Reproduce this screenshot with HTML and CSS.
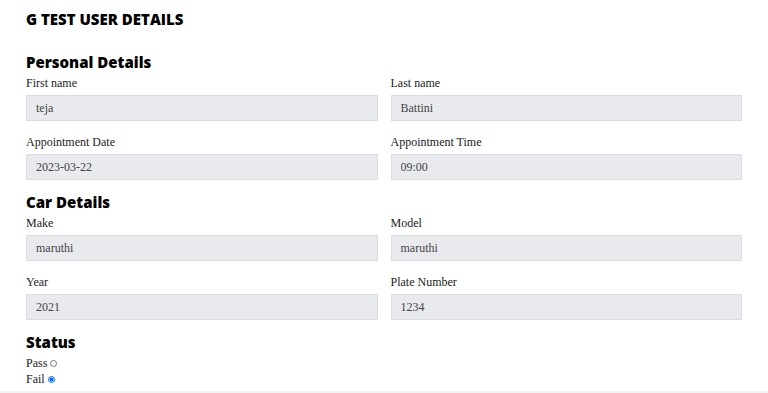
FILE: index.html
```html
<!DOCTYPE html>
<html>
<head>
    <title>G Test User Details</title>
    <link rel="stylesheet" href="styles.css">
</head>
<body>
    <div class="page">
        <h1>G TEST USER DETAILS</h1>

        <h2>Personal Details</h2>
        <div class="grid">
            <div class="field">
                <label>First name</label>
                <input type="text" value="teja" readonly>
            </div>
            <div class="field">
                <label>Last name</label>
                <input type="text" value="Battini" readonly>
            </div>
            <div class="field">
                <label>Appointment Date</label>
                <input type="text" value="2023-03-22" readonly>
            </div>
            <div class="field">
                <label>Appointment Time</label>
                <input type="text" value="09:00" readonly>
            </div>
        </div>

        <h2>Car Details</h2>
        <div class="grid">
            <div class="field">
                <label>Make</label>
                <input type="text" value="maruthi" readonly>
            </div>
            <div class="field">
                <label>Model</label>
                <input type="text" value="maruthi" readonly>
            </div>
            <div class="field">
                <label>Year</label>
                <input type="text" value="2021" readonly>
            </div>
            <div class="field">
                <label>Plate Number</label>
                <input type="text" value="1234" readonly>
            </div>
        </div>

        <h2>Status</h2>
        <div class="status">
            <label class="opt">Pass <input type="radio" name="status" value="pass"></label>
            <label class="opt">Fail <input type="radio" name="status" value="fail" checked></label>
        </div>
    </div>
    <div class="footer"></div>
</body>
</html>
```

FILE: styles.css
```css
body { margin: 0; font-family: "Liberation Serif", serif; color: #222; background: #fff; }
.page { padding: 10px 26px 0 26px; }
h1 { font-family: "Open Sans", sans-serif; font-weight: 800; font-size: 15px; line-height: 18px; margin: 0 0 23px 0; color: #000; }
h2 { font-family: "Open Sans", sans-serif; font-weight: 800; font-size: 15px; line-height: 22px; margin: 0 0 2px 0; color: #000; }
.grid { display: grid; grid-template-columns: 1fr 1fr; column-gap: 13px; row-gap: 13px; margin-bottom: 11px; }
.field { display: flex; flex-direction: column; gap: 4px; }
.field label { font-size: 12px; line-height: 16px; color: #222; }
.field input {
    height: 26px; box-sizing: border-box; padding: 0 9px;
    border: 1px solid #dcdde1; background: #e9eaee;
    font-family: "Liberation Serif", serif; font-size: 12px; color: #444;
    outline: none;
}
.status { display: flex; flex-direction: column; }
.opt { font-size: 12px; line-height: 16px; display: flex; align-items: center; gap: 3px; }
.opt input { width: 7px; height: 7px; margin: 0; }
.footer { height: 3px; background: #f2f2f2; margin-top: 4px; }
```
